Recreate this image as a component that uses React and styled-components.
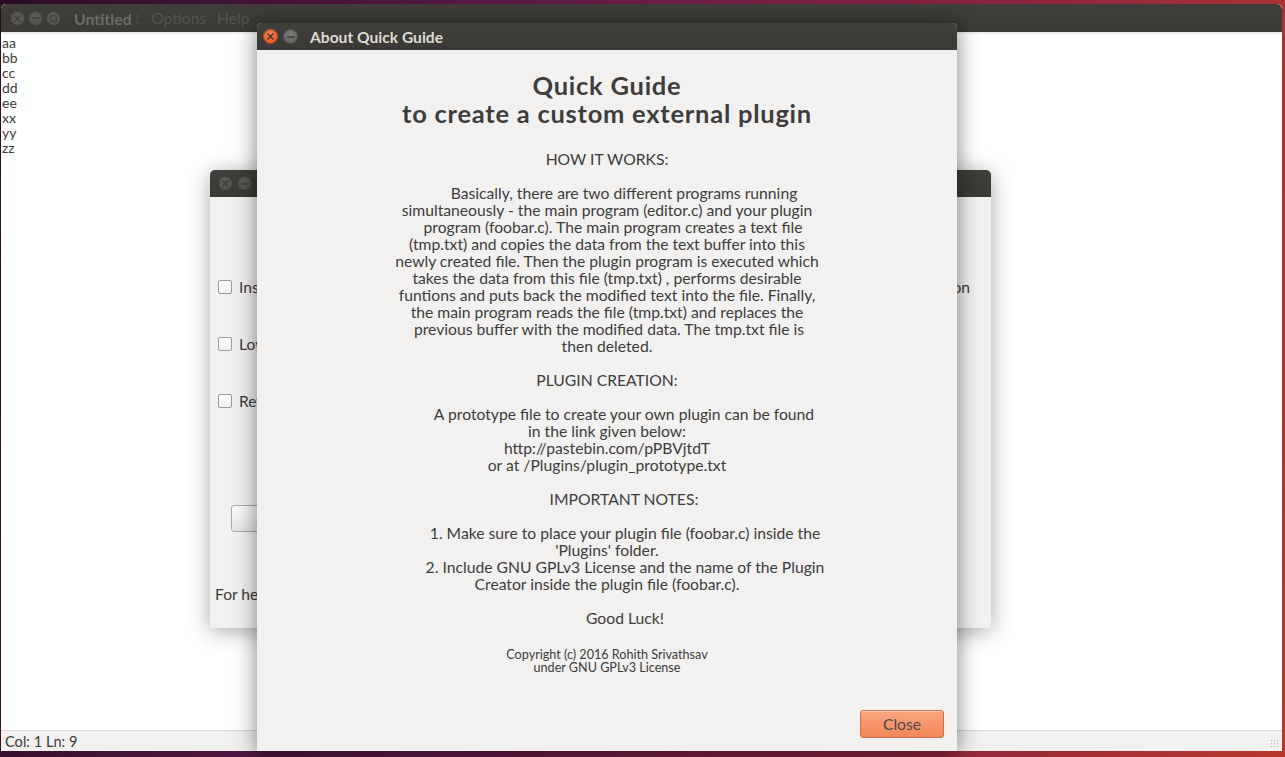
import React from 'react';
import styled, { createGlobalStyle } from 'styled-components';

const GlobalStyle = createGlobalStyle`
  html, body {
    margin: 0;
    padding: 0;
    width: 1285px;
    height: 757px;
    overflow: hidden;
  }
  * { box-sizing: border-box; }
`;

const FONT = `"Lato", "Open Sans", "DejaVu Sans", sans-serif`;

const Desktop = styled.div`
  position: relative;
  width: 1285px;
  height: 757px;
  padding: 4px 3px 6px 1px;
  font-family: ${FONT};
  background:
    linear-gradient(100deg, #2c0b26 0%, #5a1a4a 35%, #8a2440 70%, #b8382c 100%);
`;

const Window = styled.div`
  display: flex;
  flex-direction: column;
  height: 100%;
  background: #ffffff;
  border-radius: 5px 5px 0 0;
  overflow: hidden;
`;

const TitleBar = styled.div`
  display: flex;
  align-items: center;
  height: ${p => p.$h || 28}px;
  flex: none;
  padding-left: ${p => p.$pad || 10}px;
  background: linear-gradient(#3f3e3a, #3a3935);
  border-radius: 5px 5px 0 0;
`;

const Buttons = styled.div`
  display: flex;
  gap: ${p => p.$gap || 4}px;
  margin-right: ${p => p.$after || 18}px;
`;

const WinBtn = styled.span`
  width: ${p => p.$size || 15}px;
  height: ${p => p.$size || 15}px;
  border-radius: 50%;
  display: flex;
  align-items: center;
  justify-content: center;
  background: ${p =>
    p.$kind === 'close'
      ? 'radial-gradient(circle at 50% 35%, #f57e4e, #e0501c)'
      : p.$kind === 'focus'
      ? 'radial-gradient(circle at 50% 35%, #7a7975, #5f5e5a)'
      : 'radial-gradient(circle at 50% 35%, #5d5c58, #4f4e4a)'};
  box-shadow: inset 0 0 0 1px rgba(0, 0, 0, 0.25);
  svg { display: block; }
`;

const WinTitle = styled.span`
  font-size: ${p => p.$dim ? 15.8 : 15.6}px;
  font-weight: 700;
  color: ${p => p.$dim ? '#6c6b66' : '#dfdbd2'};
`;

const MenuItem = styled.span`
  font-size: 15.6px;
  color: #55544f;
  opacity: ${p => p.$faint ? 0.6 : 1};
  margin-left: ${p => p.$gap}px;
`;

const Editor = styled.div`
  flex: 1;
  border-top: 2px solid #edeceb;
  padding: 1px 0 0 1px;
  font-size: 14px;
  line-height: 15px;
  color: #3c3c3c;
`;

const StatusBar = styled.div`
  position: relative;
  flex: none;
  height: 21px;
  border-top: 1px solid #d6d5d3;
  background: #f2f1f0;
  display: flex;
  align-items: center;
  padding-left: 4px;
  font-size: 14.6px;
  color: #3c3c3c;
`;

const Grip = styled.div`
  position: absolute;
  right: 2px;
  bottom: 2px;
  width: 10px;
  height: 10px;
  background-image: radial-gradient(#b5b4b0 40%, transparent 45%);
  background-size: 3px 3px;
`;

const Dialog = styled.div`
  position: absolute;
  left: ${p => p.$x}px;
  top: ${p => p.$y}px;
  width: ${p => p.$w}px;
  height: ${p => p.$h}px;
  display: flex;
  flex-direction: column;
  background: #f2f1f0;
  border-radius: 5px 5px 0 0;
  box-shadow: 0 3px 22px rgba(0, 0, 0, ${p => p.$shadow || 0.45});
`;

const BackBody = styled.div`
  flex: 1;
  padding: 82px 21px 0 8px;
  display: flex;
  flex-direction: column;
  font-size: 15.6px;
  color: #3c3c3c;
`;

const OptionRow = styled.div`
  display: flex;
  align-items: center;
  justify-content: space-between;
  height: 16px;
  margin-bottom: 41px;
`;

const Check = styled.label`
  display: flex;
  align-items: center;
  gap: 7px;
`;

const Box = styled.span`
  width: 14px;
  height: 14px;
  border: 1px solid #9c9b99;
  border-radius: 2px;
  background: linear-gradient(#ffffff, #f2f2f2);
`;

const PlainButton = styled.div`
  margin: 55px 0 0 13px;
  width: 180px;
  height: 27px;
  border: 1px solid #a9a8a5;
  border-radius: 3px;
  background: linear-gradient(#fbfbfb, #e6e5e3);
`;

const HelpText = styled.div`
  margin: 53px 0 0 -3px;
`;

const AboutBody = styled.div`
  flex: 1;
  display: flex;
  flex-direction: column;
  align-items: stretch;
  padding-top: 21px;
  color: #3c3c3c;
  text-align: center;
`;

const Heading = styled.h1`
  margin: 0;
  font-size: 25.5px;
  line-height: 28px;
  letter-spacing: 0.75px;
  font-weight: 700;
  color: #3d3d3d;
`;

const HeadLine = styled.span`
  display: block;
  height: 28px;
`;

const Guide = styled.div`
  margin-top: 24px;
  font-size: 15.7px;
  line-height: 17px;
`;

const Line = styled.div`
  white-space: pre;
  min-height: 17px;
  padding-left: ${p => p.$shift ? p.$shift * 2 : 0}px;
`;

const Copyright = styled.div`
  margin-top: 21px;
  font-size: 12.6px;
  line-height: 13px;
`;

const Footer = styled.div`
  margin-top: auto;
  display: flex;
  justify-content: flex-end;
  padding: 0 13px 13px 0;
`;

const CloseButton = styled.button`
  width: 84px;
  height: 28px;
  font-family: ${FONT};
  font-size: 15.7px;
  color: #4a4a4a;
  border: 1px solid #c7704b;
  border-radius: 3px;
  background: linear-gradient(#f9a57f, #f48759);
  box-shadow: inset 0 1px 0 rgba(255, 255, 255, 0.35);
`;

const Cross = ({ color = '#3b3a36' }) => (
  <svg width="7" height="7" viewBox="0 0 7 7">
    <path d="M1 1L6 6M6 1L1 6" stroke={color} strokeWidth="1.3" strokeLinecap="round" />
  </svg>
);

const Dash = ({ color = '#3b3a36' }) => (
  <svg width="8" height="2" viewBox="0 0 8 2">
    <path d="M0.5 1H7.5" stroke={color} strokeWidth="1.3" strokeLinecap="round" />
  </svg>
);

const Square = ({ color = '#3b3a36' }) => (
  <svg width="7" height="7" viewBox="0 0 7 7">
    <rect x="0.7" y="0.7" width="5.6" height="5.6" fill="none" stroke={color} strokeWidth="1.2" />
  </svg>
);

const guideLines = [
  ['HOW IT WORKS:'],
  [''],
  ['Basically, there are two different programs running', 17],
  ['simultaneously - the main program (editor.c) and your plugin'],
  ['program (foobar.c). The main program creates a text file', 6],
  ['(tmp.txt) and copies the data from the text buffer into this'],
  ['newly created file. Then the plugin program is executed which'],
  ['takes the data from this file (tmp.txt) , performs desirable'],
  ['funtions and puts back the modified text into the file. Finally,'],
  ['the main program reads the file (tmp.txt) and replaces the'],
  ['previous buffer with the modified data. The tmp.txt file is', 2],
  ['then deleted.'],
  [''],
  ['PLUGIN CREATION:'],
  [''],
  ['A prototype file to create your own plugin can be found', 17],
  ['in the link given below:'],
  ['http://pastebin.com/pPBVjtdT'],
  ['or at /Plugins/plugin_prototype.txt'],
  [''],
  ['IMPORTANT NOTES:', 17],
  [''],
  ['1. Make sure to place your plugin file (foobar.c) inside the', 18],
  ["'Plugins' folder."],
  ['2. Include GNU GPLv3 License and the name of the Plugin', 18],
  ['Creator inside the plugin file (foobar.c).'],
  [''],
  ['Good Luck!', 18],
];

const editorLines = ['aa', 'bb', 'cc', 'dd', 'ee', 'xx', 'yy', 'zz'];

export default function App() {
  return (
    <>
      <GlobalStyle />
      <Desktop>
        <Window>
          <TitleBar $pad={9}>
            <Buttons $gap={3} $after={13}>
              <WinBtn><Cross color="#3f3e3a" /></WinBtn>
              <WinBtn><Dash color="#3f3e3a" /></WinBtn>
              <WinBtn><Square color="#3f3e3a" /></WinBtn>
            </Buttons>
            <WinTitle $dim>Untitled</WinTitle>
            <MenuItem $gap={3} $faint>t</MenuItem>
            <MenuItem $gap={11}>Options</MenuItem>
            <MenuItem $gap={11}>Help</MenuItem>
          </TitleBar>
          <Editor>
            {editorLines.map(l => <div key={l}>{l}</div>)}
          </Editor>
          <StatusBar>
            Col: 1 Ln: 9
            <Grip />
          </StatusBar>
        </Window>

        <Dialog $x={210} $y={170} $w={781} $h={458} $shadow={0.35}>
          <TitleBar $h={27} $pad={8}>
            <Buttons $gap={4}>
              <WinBtn><Cross color="#3f3e3a" /></WinBtn>
              <WinBtn><Dash color="#3f3e3a" /></WinBtn>
            </Buttons>
            <WinTitle $dim>Plugins</WinTitle>
          </TitleBar>
          <BackBody>
            <OptionRow>
              <Check><Box />Insert text</Check>
              <span>Insert at position</span>
            </OptionRow>
            <OptionRow>
              <Check><Box />Lowercase</Check>
            </OptionRow>
            <OptionRow>
              <Check><Box />Reverse</Check>
            </OptionRow>
            <PlainButton />
            <HelpText>For help, see Quick Guide</HelpText>
          </BackBody>
        </Dialog>

        <Dialog $x={257} $y={23} $w={700} $h={728} $shadow={0.5}>
          <TitleBar $h={27} $pad={6}>
            <Buttons $gap={5} $after={12}>
              <WinBtn $kind="close"><Cross color="#3a2a22" /></WinBtn>
              <WinBtn $kind="focus"><Dash color="#3b3a36" /></WinBtn>
            </Buttons>
            <WinTitle>About Quick Guide</WinTitle>
          </TitleBar>
          <AboutBody>
            <Heading>
              <HeadLine>Quick Guide</HeadLine>
              <HeadLine>to create a custom external plugin</HeadLine>
            </Heading>
            <Guide>
              {guideLines.map(([text, shift], i) => (
                <Line key={i} $shift={shift}>{text}</Line>
              ))}
            </Guide>
            <Copyright>
              Copyright (c) 2016 Rohith Srivathsav
              <br />
              under GNU GPLv3 License
            </Copyright>
            <Footer>
              <CloseButton>Close</CloseButton>
            </Footer>
          </AboutBody>
        </Dialog>
      </Desktop>
    </>
  );
}
